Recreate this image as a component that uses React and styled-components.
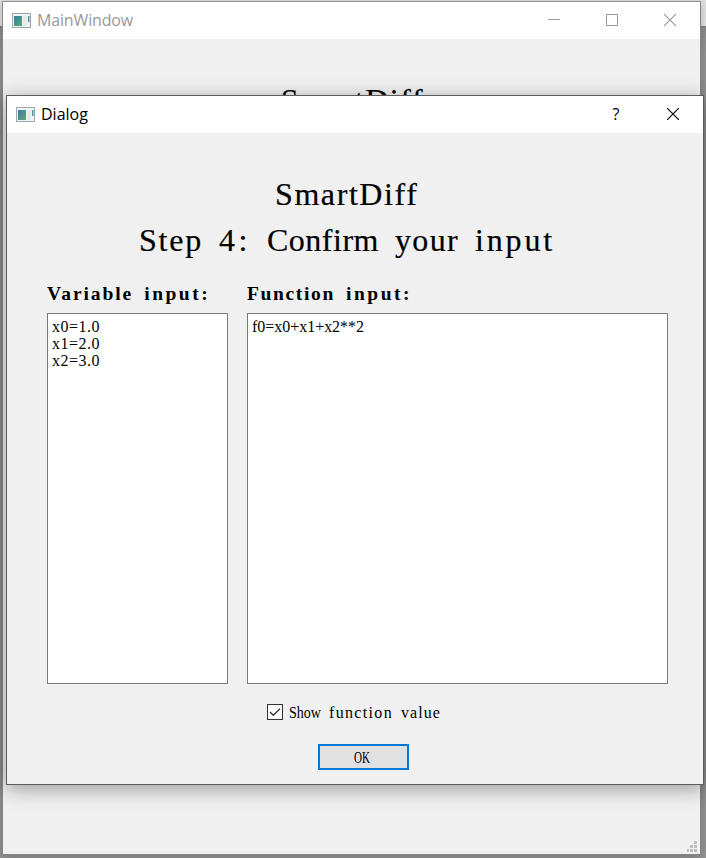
import React from "react";
import styled, { createGlobalStyle } from "styled-components";

const GlobalStyle = createGlobalStyle`
  * { box-sizing: border-box; }
  html, body { margin: 0; overflow: hidden; }
`;

const Desktop = styled.div`
  position: relative;
  width: 706px;
  height: 858px;
  padding: 1px 5px 3px 2px;
  overflow: hidden;
  background: linear-gradient(#e2e2e2 0, #e6e6e6 26px, #7e7e7e 26px, #8e8e8e 28px, #969696 60px, #969696 100%);
`;

const Window = styled.section`
  display: flex;
  flex-direction: column;
  background: #f0f0f0;
`;

const MainFrame = styled(Window)`
  width: 699px;
  height: 854px;
  border: 1px solid #858585;
  border-top-color: #929292;
  box-shadow: 0 2px 10px rgba(0, 0, 0, 0.25);
`;

const DialogFrame = styled(Window)`
  position: absolute;
  left: 6px;
  top: 95px;
  width: 698px;
  height: 690px;
  border: 1px solid #5c5c5c;
  box-shadow: 0 4px 18px rgba(0, 0, 0, 0.36);
`;

const TitleBar = styled.header`
  display: flex;
  flex: none;
  align-items: center;
  height: 37px;
  padding: 0 1px 0 9px;
  background: #fff;
  color: ${(p) => (p.$active ? "#000" : "#999")};
`;

const Caption = styled.span`
  flex: 1;
  margin: -1px 0 0 5px;
  font: 16px/22px "Open Sans", "Noto Sans", sans-serif;
  letter-spacing: ${(p) => p.$spacing || 0}px;
`;

const TitleButton = styled.button`
  display: flex;
  align-items: center;
  justify-content: center;
  width: ${(p) => p.$width || 58}px;
  height: 37px;
  padding: 0 0 2px;
  border: 0;
  background: transparent;
  color: inherit;
  font: 16px "Open Sans", sans-serif;
`;

const Glyph = styled.svg`
  display: block;
  flex: none;
`;

const MainBody = styled.main`
  display: flex;
  flex: 1;
  flex-direction: column;
  align-items: center;
  justify-content: space-between;
  padding: 38px 3px 2px 5px;
`;

const ResizeGrip = styled(Glyph)`
  align-self: flex-end;
`;

const DialogBody = styled.div`
  display: flex;
  flex: 1;
  flex-direction: column;
  padding: 38px 35px 14px 40px;
`;

const Heading = styled.h1`
  margin: 0 0 0 ${(p) => p.$indent || 0}px;
  font: 400 32px/46px "Liberation Serif", serif;
  color: #000;
  -webkit-text-stroke: 0.2px #000;
`;

const Columns = styled.div`
  display: grid;
  grid-template-columns: 181px 421px;
  column-gap: 19px;
  margin-top: 20px;
`;

const Label = styled.h2`
  margin: 0;
  height: 22px;
  font: 700 19.5px/22px "Liberation Serif", serif;
`;

const TextBox = styled.div`
  height: 371px;
  margin-top: 8px;
  padding: 4px;
  border: 1px solid #7a7a7a;
  background: #fff;
  font: 16px/17px "Liberation Serif", serif;
`;

const Line = styled.div`
  height: 17px;
`;

const CheckRow = styled.label`
  display: flex;
  align-items: center;
  height: 18px;
  margin: 20px 0 0 220px;
  font: 16px/18px "Liberation Serif", serif;
`;

const CheckBox = styled.span`
  display: flex;
  width: 16px;
  height: 16px;
  margin: 0 6px 2px 0;
  border: 1px solid #333;
  background: #fff;
`;

const OkButton = styled.button`
  width: 91px;
  height: 26px;
  margin: 22px 0 0 271px;
  padding: 2px 3px 0 0;
  border: 2px solid #0078d7;
  background: #e1e1e1;
  color: #000;
  font: 16px/18px "Liberation Serif", serif;
`;

const Run = styled.span`
  white-space: pre;
  letter-spacing: ${(p) => p.$spacing}px;
`;

const CondensedRun = styled.span`
  display: inline-block;
  width: ${(p) => p.$width}px;
  white-space: pre;
  text-align: left;
  transform: scaleX(${(p) => p.$scale});
  transform-origin: left center;
`;

// Advance widths in em; characters not listed are half an em wide.
const REGULAR = {
  S: 0.556, m: 0.778, a: 0.444, r: 0.333, t: 0.278, D: 0.722, i: 0.278, f: 0.333,
  e: 0.444, ":": 0.278, C: 0.667, "=": 0.564, "+": 0.564, ".": 0.25, l: 0.278,
  w: 0.722, c: 0.444, O: 0.722, K: 0.722, " ": 0.25,
};
const BOLD = {
  V: 0.722, r: 0.444, i: 0.278, b: 0.556, l: 0.278, e: 0.444, n: 0.556, p: 0.556,
  u: 0.556, t: 0.333, ":": 0.333, F: 0.611, c: 0.444, " ": 0.25,
};

// Sets proportional serif type on a fixed character pitch, word by word.
// Words clearly wider than their pitch are condensed instead of overlapped.
function Pitch({ text, size, pitch, bold }) {
  const widths = bold ? BOLD : REGULAR;
  return text.split(/( )/).map((word, i) => {
    const natural = [...word].reduce((sum, c) => sum + (widths[c] ?? 0.5) * size, 0);
    const target = word.length * pitch;
    if (natural > target * 1.1) {
      return (
        <CondensedRun key={i} $width={target} $scale={target / natural}>
          {word}
        </CondensedRun>
      );
    }
    return (
      <Run key={i} $spacing={(target - natural) / word.length}>
        {word}
      </Run>
    );
  });
}

function AppIcon() {
  return (
    <Glyph width="20" height="16" viewBox="0 0 20 16">
      <defs>
        <linearGradient id="screen" x1="0" y1="0" x2="1" y2="1">
          <stop offset="0" stopColor="#3c7ba8" />
          <stop offset="1" stopColor="#55ad73" />
        </linearGradient>
      </defs>
      <rect x="0.5" y="0.5" width="18" height="14" fill="#f1f3f5" stroke="#a0a6ae" />
      <rect x="2" y="3" width="8" height="10" fill="url(#screen)" />
      <rect x="11" y="3" width="4" height="10" fill="#e7e9ec" />
      <rect x="16" y="3" width="1.5" height="6" fill="#4b94a0" />
    </Glyph>
  );
}

function CloseIcon() {
  return (
    <Glyph width="12" height="12" viewBox="0 0 12 12">
      <path d="M0 0 12 12M12 0 0 12" stroke="currentColor" strokeWidth="1.15" />
    </Glyph>
  );
}

export default function App() {
  return (
    <Desktop>
      <GlobalStyle />
      <MainFrame>
        <TitleBar>
          <AppIcon />
          <Caption $spacing={-0.15}>MainWindow</Caption>
          <TitleButton aria-label="Minimize">
            <Glyph width="12" height="12" viewBox="0 0 12 12">
              <path d="M0 5.5H12" stroke="currentColor" />
            </Glyph>
          </TitleButton>
          <TitleButton aria-label="Maximize">
            <Glyph width="12" height="12" viewBox="0 0 12 12">
              <rect x="0.5" y="0.5" width="11" height="11" fill="none" stroke="currentColor" />
            </Glyph>
          </TitleButton>
          <TitleButton aria-label="Close"><CloseIcon /></TitleButton>
        </TitleBar>
        <MainBody>
          <Heading><Pitch text="SmartDiff" size={32} pitch={16} /></Heading>
          <ResizeGrip width="10" height="11" viewBox="0 0 10 11" fill="#bfbfbf">
            <path d="M7 0h3v3H7zM3 4h3v3H3zM7 4h3v3H7zM0 8h2v3H0zM3 8h3v3H3zM7 8h3v3H7z" />
          </ResizeGrip>
        </MainBody>
      </MainFrame>

      <DialogFrame role="dialog">
        <TitleBar $active>
          <AppIcon />
          <Caption>Dialog</Caption>
          <TitleButton aria-label="Help" $width={56}>?</TitleButton>
          <TitleButton aria-label="Close"><CloseIcon /></TitleButton>
        </TitleBar>
        <DialogBody>
          <Heading $indent={228}><Pitch text="SmartDiff" size={32} pitch={16} /></Heading>
          <Heading $indent={92}><Pitch text="Step 4: Confirm your input" size={32} pitch={16} /></Heading>
          <Columns>
            <Label><Pitch text="Variable input:" size={19.5} pitch={11} bold /></Label>
            <Label><Pitch text="Function input:" size={19.5} pitch={11} bold /></Label>
            <TextBox>
              {["x0=1.0", "x1=2.0", "x2=3.0"].map((line) => (
                <Line key={line}><Pitch text={line} size={16} pitch={8} /></Line>
              ))}
            </TextBox>
            <TextBox>
              <Line><Pitch text="f0=x0+x1+x2**2" size={16} pitch={8} /></Line>
            </TextBox>
          </Columns>
          <CheckRow>
            <CheckBox>
              <Glyph width="14" height="14" viewBox="0 0 14 14">
                <path d="M2 7 5.3 10.3 12 3.7" fill="none" stroke="#333" strokeWidth="1.3" />
              </Glyph>
            </CheckBox>
            <span><Pitch text="Show function value" size={16} pitch={8} /></span>
          </CheckRow>
          <OkButton><Pitch text="OK" size={16} pitch={8} /></OkButton>
        </DialogBody>
      </DialogFrame>
    </Desktop>
  );
}
